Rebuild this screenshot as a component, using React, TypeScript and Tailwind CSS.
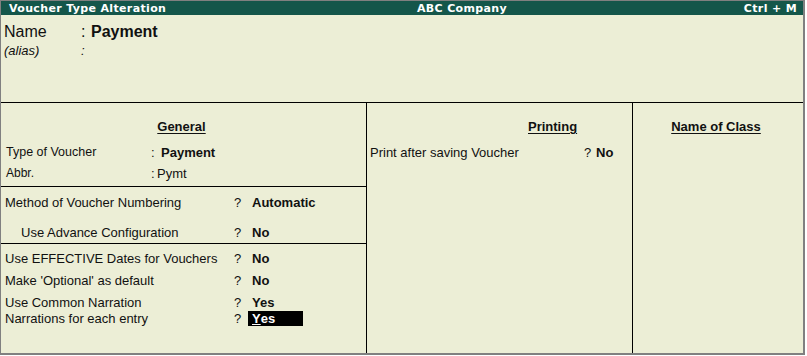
import React from "react";

const font = { fontFamily: '"Liberation Sans", Arial, sans-serif' };

function Row({ label, value, bold = true, indent = 4, highlight = false }: { label: string; value: string; bold?: boolean; indent?: number; highlight?: boolean }) {
  return (
    <div className="flex h-[15px] items-center">
      <div className={indent === 20 ? "w-[233px] pl-[20px]" : "w-[233px] pl-[4px]"}>{label}</div>
      <div className="w-[14px]">?</div>
      {highlight ? (
        <div className="flex h-[15px] w-[55px] items-center bg-black pl-[4px] font-bold text-white">
          <span className="underline">Y</span>es
        </div>
      ) : (
        <div className={`pl-[4px] ${bold ? "font-bold" : ""}`}>{value}</div>
      )}
    </div>
  );
}

export default function App() {
  return (
    <div className="h-[356px] w-[807px] bg-white" style={font}>
      <div className="flex h-[355px] w-[805px] flex-col border-b-2 border-l border-r-2 border-t border-[#808080] bg-[#ECEED6] text-[13px] leading-[15px] text-[#111]">
        <div
          className="flex h-[14px] items-center bg-[#14564A] pl-[8px] pr-[6px] text-[11px] font-bold tracking-[0.35px] text-white"
          style={{ fontFamily: '"DejaVu Sans", Verdana, sans-serif' }}
        >
          <div className="w-[408px]">Voucher Type Alteration</div>
          <div className="flex-1">ABC Company</div>
          <div>Ctrl + M</div>
        </div>
        <div className="h-[87px] pl-[3px] pt-[7px]">
          <div className="flex h-[18px] items-center text-[16px]">
            <div className="w-[77px]">Name</div>
            <div className="w-[10px]">:</div>
            <div className="font-bold">Payment</div>
          </div>
          <div className="mt-[1px] flex h-[18px] items-center text-[13px] italic">
            <div className="w-[77px]">(alias)</div>
            <div>:</div>
          </div>
        </div>
        <div className="flex flex-1 border-t border-black">
          <div className="flex w-[366px] flex-col border-r border-black">
            <div className="flex h-[83px] flex-col">
              <div className="mt-[16px] flex h-[15px] items-center justify-center pr-[4px]">
                <span className="font-bold underline underline-offset-2">General</span>
              </div>
              <div className="mt-[11px] flex h-[15px] items-center">
                <div className="w-[150px] pl-[5px] text-[12.5px]">Type of Voucher</div>
                <div className="w-[10px]">:</div>
                <div className="font-bold">Payment</div>
              </div>
              <div className="mt-[6px] flex h-[15px] items-center">
                <div className="w-[150px] pl-[5px] text-[12px]">Abbr.</div>
                <div className="w-[6px]">:</div>
                <div>Pymt</div>
              </div>
            </div>
            <div className="flex h-[57px] flex-col border-t border-black pt-[8px]">
              <Row label="Method of Voucher Numbering" value="Automatic" />
              <div className="mt-[15px]">
                <Row label="Use Advance Configuration" value="No" indent={20} />
              </div>
            </div>
            <div className="flex flex-col border-t border-black pt-[7px]">
              <Row label="Use EFFECTIVE Dates for Vouchers" value="No" />
              <div className="mt-[7px]">
                <Row label="Make 'Optional' as default" value="No" />
              </div>
              <div className="mt-[7px]">
                <Row label="Use Common Narration" value="Yes" />
              </div>
              <div className="mt-[1px]">
                <Row label="Narrations for each entry" value="Yes" highlight />
              </div>
            </div>
          </div>
          <div className="flex w-[266px] flex-col border-r border-black">
            <div className="mt-[16px] flex h-[15px] items-center pl-[161px]">
              <span className="font-bold underline underline-offset-2">Printing</span>
            </div>
            <div className="mt-[11px] flex h-[15px] items-center">
              <div className="w-[217px] pl-[3px]">Print after saving Voucher</div>
              <div className="w-[12px]">?</div>
              <div className="font-bold">No</div>
            </div>
          </div>
          <div className="flex flex-1 flex-col">
            <div className="mt-[16px] flex h-[15px] items-center justify-center pr-[4px]">
              <span className="font-bold underline underline-offset-2">Name of Class</span>
            </div>
          </div>
        </div>
      </div>
    </div>
  );
}
